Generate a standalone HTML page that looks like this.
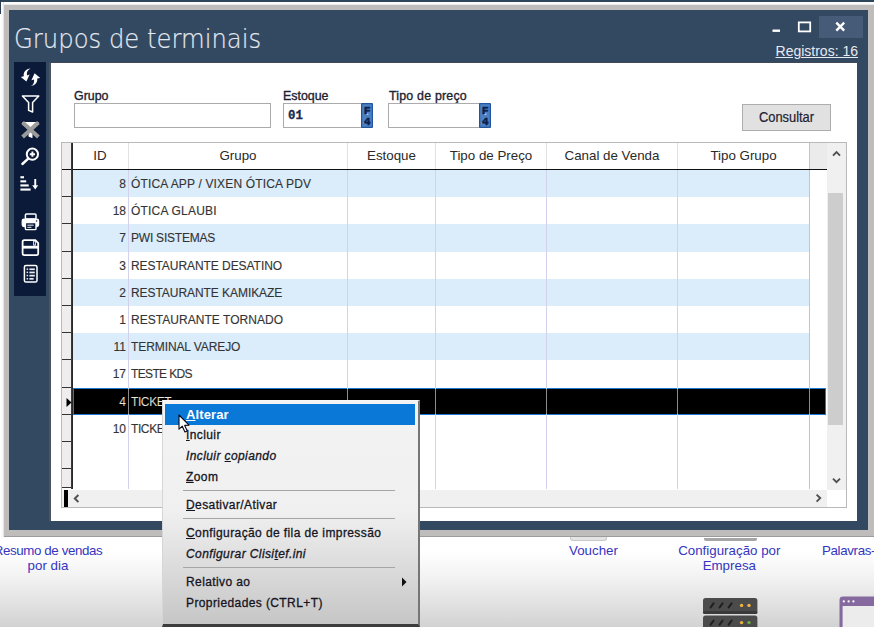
<!DOCTYPE html>
<html><head><meta charset="utf-8"><title>Grupos de terminais</title>
<style>
html,body{margin:0;padding:0}
body{width:874px;height:627px;position:relative;overflow:hidden;font-family:"Liberation Sans",sans-serif;background:#fff}
.abs{position:absolute}
.abs *{position:absolute}
#desk{left:0;top:0;width:874px;height:627px;background:linear-gradient(#fff 0,#fff 552px,#f1f1f1 580px,#d2d2d2 627px)}
#topstrip{left:0;top:0;width:874px;height:2px;background:#2e465b}
#leftstrip{left:0;top:0;width:1px;height:14px;background:#2a3c52}
#win{left:1px;top:2px;width:873px;height:535px;background:#bfbcbc}
#winhl{left:1px;top:2px;width:873px;height:3px;background:linear-gradient(#fdfdfd 0,#fafafa 2px,#dcdcdc 3px)}
#winhl2{left:1px;top:2px;width:3px;height:535px;background:linear-gradient(90deg,#fdfdfd 0,#f6f6f6 2px,#d4d4d4 3px)}
#blue{left:9px;top:10px;width:859px;height:520px;background:#334861}
#content{left:50.5px;top:63px;width:806.5px;height:458px;background:#fff}
#cedge{left:48.8px;top:62px;width:2px;height:459px;background:#4f535b}
#cedge2{left:49px;top:62px;width:808px;height:1.2px;background:#414957}
#tool{left:14px;top:62px;width:32px;height:234px;background:#0b1a39}
#title{left:14px;top:21px;-webkit-text-stroke:.2px #e3e9f0;font-family:"DejaVu Sans Light","DejaVu Sans","Liberation Sans",sans-serif;font-weight:200;font-size:27px;line-height:36px;color:#e3e9f0;white-space:nowrap;transform-origin:0 0;transform:scaleX(.90)}
#closebg{left:819px;top:16px;width:44px;height:22px;background:#465b78}
#reg{right:16px;top:42px;font-size:14px;line-height:18px;color:#e6ebf2;text-decoration:underline;white-space:nowrap}
.flabel{font-size:12.4px;line-height:14px;color:#1e2230;-webkit-text-stroke:.35px #1e2230;white-space:nowrap}
.finput{height:23px;border:1px solid #ababab;background:#fff}
.f4{width:11px;height:25px;background:#3f72ad}
#btn{left:742px;top:104px;width:87px;height:25px;border:1px solid #adadad;background:#e1e1e1;color:#1e2230}
#btn span{left:0;top:0;width:87px;font-size:14px;line-height:25px;text-align:center;transform:scaleX(.92);-webkit-text-stroke:.2px #1e2230}
#grid{left:61px;top:142px;width:784px;height:364px;border:1px solid #b9b9b9;background:#fff;overflow:hidden}
.row{left:11px;width:737px;font-size:12px;color:#333;-webkit-text-stroke:.15px #444;background:#fff}
.row.alt{background:#dbedfb}
.row.sel{width:753px;background:#000;color:#efe9dd;box-shadow:inset 0 0 0 1px #1b77d2}
.row span{top:0;height:100%;box-sizing:border-box;padding-bottom:0;display:flex;align-items:center;white-space:nowrap}
.row .id{left:0;width:53px;justify-content:flex-end}
.row .nm{left:58px}
.ind{left:0;width:10px;background:#efeded;border-bottom:1px solid #333}
.hd{top:0;height:26px;font-size:13.33px;line-height:25px;text-align:center;color:#2a2a2a;white-space:nowrap}
.vsep{top:27px;width:1px;height:319px;background:#d2d2ec}
.hsep{top:0;width:1px;height:26px;background:#e2e2e2}
.dlabel{color:#3535c0;font-size:13.33px;line-height:15.4px;text-align:center;white-space:nowrap}
#menu{left:162px;top:400px;width:255px;height:223px;border-left:1px solid #d6d6d6;border-top:1px solid #f6f6f6;border-right:2px solid #767676;border-bottom:3px solid #3c3c3c;background:linear-gradient(#f3f3f3 0,#f0f0f0 110px,#dcdcdc 165px,#c6c6c6 223px)}
.mi{left:23px;font-size:12px;line-height:20px;height:20px;color:#15151f;-webkit-text-stroke:.3px #15151f;white-space:nowrap;letter-spacing:.4px}
.mi i{position:static}
.mi u{position:static}
.msep{left:20px;width:212px;height:1px;background:#a6a6a6}

</style></head><body>
<div class="abs" id="desk"></div>
<div class="abs" id="win"></div>
<div class="abs" style="left:1px;top:536px;width:873px;height:1px;background:#9c9c9c"></div>
<div class="abs" id="winhl"></div><div class="abs" id="winhl2"></div>
<div class="abs" id="topstrip"></div><div class="abs" id="leftstrip"></div>
<div class="abs" id="blue"></div>
<div class="abs" id="title">Grupos de terminais</div>
<div class="abs" id="closebg"></div>
<svg class="abs" style="left:765px;top:14px" width="100" height="26" viewBox="0 0 100 26">
<rect x="7.5" y="15.5" width="7.5" height="2.4" fill="#fff"/>
<rect x="33.8" y="8.4" width="11.4" height="9" fill="none" stroke="#fff" stroke-width="1.8"/>
<path d="M71.3 8.7 L79.2 16.6 M79.2 8.7 L71.3 16.6" stroke="#fff" stroke-width="2.4" fill="none"/>
</svg>
<div class="abs" id="reg">Registros: 16</div>
<div class="abs" id="tool"></div>
<svg class="abs" style="left:14px;top:62px" width="32" height="235" viewBox="14 62 32 235">
<!-- refresh arrows -->
<g fill="#fff" stroke="none">
<path d="M30.6 68.6 C27.6 69.8 26.4 72.6 27.0 75.4 L29.6 74.6 L26.4 81.6 L20.8 76.9 L23.8 76.2 C23.2 72.4 25.8 68.9 30.6 68.6 Z"/>
<path d="M30.4 86.2 C33.4 85.0 34.6 82.2 34.0 79.4 L31.4 80.2 L34.6 73.2 L40.2 77.9 L37.2 78.6 C37.8 82.4 35.2 85.9 30.4 86.2 Z"/>
</g>
<!-- funnel outline -->
<path d="M22.4 96 L38.8 96 L32.6 102.4 L32.6 112 L28.6 110.4 L28.6 102.4 Z" fill="none" stroke="#fff" stroke-width="1.5" stroke-linejoin="round"/>
<!-- funnel with X -->
<path d="M22 122 L39 122 L32.4 129.4 L32.4 138 L28.6 136.4 L28.6 129.4 Z" fill="#fff"/>
<path d="M22.6 122.6 L38.4 137 M38.4 122.6 L22.6 137" stroke="#9b9b9b" stroke-width="4" fill="none"/>
<path d="M28.8 134.6 L32.2 134.6 L32.2 137.8 L28.8 136.4 Z" fill="#fff"/>
<!-- magnifier -->
<circle cx="32.4" cy="154.2" r="5.6" fill="none" stroke="#fff" stroke-width="2"/>
<path d="M28.2 158.6 L22.4 164" stroke="#fff" stroke-width="2.4" stroke-linecap="round"/>
<path d="M32.4 151.6 L32.4 156.8 M29.8 154.2 L35 154.2" stroke="#fff" stroke-width="1.9"/>
<!-- sort -->
<g fill="#fff">
<rect x="20.4" y="176.2" width="3.6" height="2.1"/>
<rect x="20.4" y="180.3" width="5.8" height="2.1"/>
<rect x="20.4" y="184.4" width="8.3" height="2.1"/>
<rect x="20.4" y="188.5" width="10.2" height="2.1"/>
<rect x="34.3" y="179" width="1.9" height="7.5"/>
<path d="M32.2 185.2 L38.2 185.2 L35.2 189.6 Z"/>
</g>
<!-- printer -->
<g>
<rect x="25.4" y="214" width="10.6" height="5" rx="1" fill="none" stroke="#fff" stroke-width="1.5"/>
<rect x="21.6" y="218.4" width="17.6" height="8.8" rx="2.4" fill="#fff"/>
<rect x="25.4" y="222.6" width="10.6" height="7" rx="0.8" fill="#0b1a39" stroke="#fff" stroke-width="1.4"/>
<rect x="27.4" y="224.6" width="6.2" height="1.2" fill="#c8ccd4"/>
<rect x="27.4" y="226.8" width="4" height="1.2" fill="#c8ccd4"/>
<circle cx="36.6" cy="221" r="0.8" fill="#0b1a39"/>
</g>
<!-- floppy -->
<g>
<path d="M22.6 241.8 Q22.6 240.2 24.2 240.2 L35.4 240.2 L38.2 243 L38.2 253.6 Q38.2 255.2 36.6 255.2 L24.2 255.2 Q22.6 255.2 22.6 253.6 Z" fill="none" stroke="#fff" stroke-width="1.8"/>
<rect x="23" y="245.8" width="15" height="2.8" fill="#fff"/>
<rect x="33.2" y="240.6" width="2.6" height="5" fill="#fff"/>
<rect x="34" y="241.6" width="0.9" height="3" fill="#0b1a39"/>
</g>
<!-- list -->
<g>
<rect x="24.4" y="265.4" width="12.6" height="16.6" rx="1.6" fill="none" stroke="#fff" stroke-width="1.5"/>
<g fill="#e8ecf2">
<rect x="26.6" y="268.4" width="1.5" height="1.5"/><rect x="29.4" y="268.4" width="5.4" height="1.7"/>
<rect x="26.6" y="271.6" width="1.5" height="1.5"/><rect x="29.4" y="271.6" width="5.4" height="1.7"/>
<rect x="26.6" y="274.8" width="1.5" height="1.5"/><rect x="29.4" y="274.8" width="5.4" height="1.7"/>
<rect x="26.6" y="278" width="1.5" height="1.5"/><rect x="29.4" y="278" width="4.2" height="1.7"/>
</g>
</g>
</svg>

<div class="abs" id="cedge"></div><div class="abs" id="cedge2"></div>
<div class="abs" id="content"></div>
<div class="abs flabel" style="left:74px;top:89px">Grupo</div>
<div class="abs finput" style="left:74px;top:103px;width:195px"></div>
<div class="abs flabel" style="left:283px;top:89px">Estoque</div>
<div class="abs finput" style="left:283px;top:103px;width:77px"><span style="left:4px;top:5px;font-family:'Liberation Mono',monospace;font-weight:bold;font-size:12.4px;line-height:14px;color:#1b2a4e;-webkit-text-stroke:.3px #1b2a4e">01</span></div>
<svg class="abs" style="left:361px;top:103px" width="12" height="25" viewBox="0 0 12 25"><rect x="0" y="0" width="12" height="25" rx="1" fill="#23559e"/><rect x="1.2" y="1.2" width="9.6" height="22.6" fill="#4c80c4"/><rect x="2.4" y="19" width="3" height="1.6" fill="#c9bba6"/><rect x="5.4" y="10.6" width="2" height="1.4" fill="#b9c4d6"/><text x="6.2" y="11" text-anchor="middle" font-family="Liberation Mono,monospace" font-weight="bold" font-size="11.5" stroke="#0c1f4a" stroke-width=".5" fill="#0c1f4a">F</text><text x="6.2" y="21.8" text-anchor="middle" font-family="Liberation Mono,monospace" font-weight="bold" font-size="11.5" stroke="#0c1f4a" stroke-width=".5" fill="#0c1f4a">4</text></svg>
<div class="abs flabel" style="left:389px;top:89px;letter-spacing:.2px">Tipo de preço</div>
<div class="abs finput" style="left:388px;top:103px;width:90px"></div>
<svg class="abs" style="left:479px;top:103px" width="12" height="25" viewBox="0 0 12 25"><rect x="0" y="0" width="12" height="25" rx="1" fill="#23559e"/><rect x="1.2" y="1.2" width="9.6" height="22.6" fill="#4c80c4"/><rect x="2.4" y="19" width="3" height="1.6" fill="#c9bba6"/><rect x="5.4" y="10.6" width="2" height="1.4" fill="#b9c4d6"/><text x="6.2" y="11" text-anchor="middle" font-family="Liberation Mono,monospace" font-weight="bold" font-size="11.5" stroke="#0c1f4a" stroke-width=".5" fill="#0c1f4a">F</text><text x="6.2" y="21.8" text-anchor="middle" font-family="Liberation Mono,monospace" font-weight="bold" font-size="11.5" stroke="#0c1f4a" stroke-width=".5" fill="#0c1f4a">4</text></svg>
<div class="abs" id="btn"><span>Consultar</span></div>

<div class="abs" id="grid">
<div class="row alt" style="top:27px;height:27px"><span class="id">8</span><span class="nm" style="letter-spacing:0.165px">ÓTICA APP / VIXEN ÓTICA PDV</span></div>
<div class="row" style="top:54px;height:27px"><span class="id">18</span><span class="nm" style="letter-spacing:0.2px">ÓTICA GLAUBI</span></div>
<div class="row alt" style="top:81px;height:28px"><span class="id">7</span><span class="nm" style="letter-spacing:-0.22px">PWI SISTEMAS</span></div>
<div class="row" style="top:109px;height:27px"><span class="id">3</span><span class="nm" style="letter-spacing:-0.06px">RESTAURANTE DESATINO</span></div>
<div class="row alt" style="top:136px;height:27px"><span class="id">2</span><span class="nm" style="letter-spacing:-0.06px">RESTAURANTE KAMIKAZE</span></div>
<div class="row" style="top:163px;height:27px"><span class="id">1</span><span class="nm" style="letter-spacing:0.04px">RESTAURANTE TORNADO</span></div>
<div class="row alt" style="top:190px;height:27px"><span class="id">11</span><span class="nm" style="letter-spacing:-0.09px">TERMINAL VAREJO</span></div>
<div class="row" style="top:217px;height:28px"><span class="id">17</span><span class="nm" style="letter-spacing:-0.64px">TESTE KDS</span></div>
<div class="row alt sel" style="top:245px;height:27px"><span class="id">4</span><span class="nm" style="letter-spacing:-0.4px">TICKET</span></div>
<div class="row" style="top:272px;height:27px"><span class="id">10</span><span class="nm" style="letter-spacing:-0.4px">TICKET</span></div>
<div class="ind" style="top:27px;height:26px"></div>
<div class="ind" style="top:54px;height:26px"></div>
<div class="ind" style="top:81px;height:27px"></div>
<div class="ind" style="top:109px;height:26px"></div>
<div class="ind" style="top:136px;height:26px"></div>
<div class="ind" style="top:163px;height:26px"></div>
<div class="ind" style="top:190px;height:26px"></div>
<div class="ind" style="top:217px;height:27px"></div>
<div class="ind" style="top:245px;height:26px"></div>
<div class="ind" style="top:272px;height:26px"></div>
<div class="ind" style="top:299px;height:26px"></div>
<div class="ind" style="top:326px;height:18px"></div>
<div class="vsep" style="left:66px"></div>
<div class="vsep" style="left:285px"></div>
<div class="vsep" style="left:373px"></div>
<div class="vsep" style="left:484px"></div>
<div class="vsep" style="left:615px"></div>
<div class="vsep" style="left:747px;top:0;height:346px;background:#c4c4c4"></div>
<div class="hsep" style="left:66px"></div>
<div class="hsep" style="left:285px"></div>
<div class="hsep" style="left:373px"></div>
<div class="hsep" style="left:484px"></div>
<div class="hsep" style="left:615px"></div>
<div style="left:66px;top:246px;width:1px;height:25px;background:#8c8c8c"></div>
<div style="left:285px;top:246px;width:1px;height:25px;background:#8c8c8c"></div>
<div style="left:373px;top:246px;width:1px;height:25px;background:#8c8c8c"></div>
<div style="left:484px;top:246px;width:1px;height:25px;background:#8c8c8c"></div>
<div style="left:615px;top:246px;width:1px;height:25px;background:#8c8c8c"></div>
<div style="left:747px;top:246px;width:1px;height:25px;background:#8c8c8c"></div>
<div style="left:0;top:0;width:10px;height:26px;background:#efeded"></div>
<div style="left:748px;top:0;width:17px;height:26px;background:#ebebeb"></div>
<div class="hd" style="left:11px;width:54px">ID</div>
<div class="hd" style="left:67px;width:218px">Grupo</div>
<div class="hd" style="left:286px;width:87px">Estoque</div>
<div class="hd" style="left:374px;width:110px">Tipo de Preço</div>
<div class="hd" style="left:485px;width:130px">Canal de Venda</div>
<div class="hd" style="left:616px;width:131px">Tipo Grupo</div>
<div style="left:0;top:26px;width:765px;height:1px;background:#111"></div>
<div style="left:9px;top:0;width:2px;height:346px;background:linear-gradient(90deg,#8a8a8a 0,#2a2a2a .6px,#2a2a2a 1.6px,#9a9a9a 2px)"></div>
<div style="left:765px;top:0;width:19px;height:347px;background:#f0f0f0"></div>
<div style="left:766px;top:50px;width:15px;height:232px;background:#cdcdcd"></div>
<div style="left:0;top:347px;width:765px;height:17px;background:#f0f0f0"></div>
<div style="left:2px;top:347px;width:4px;height:17px;background:#000"></div>
<svg style="left:0;top:0" width="784" height="364" viewBox="0 0 784 364" fill="none" stroke="#505050" stroke-width="1.9">
<path d="M771 12.6 L774.5 9 L778 12.6"/>
<path d="M771 335.6 L774.5 339.2 L778 335.6"/>
<path d="M16.4 352 L12.8 355.5 L16.4 359"/>
<path d="M754.6 351.6 L758.2 355.1 L754.6 358.6"/>
<path d="M4.5 255 L9.5 259.5 L4.5 264 Z" fill="#000" stroke="none"/>
</svg>

</div>
<div class="abs dlabel" style="left:-12px;top:543px;width:120px"><span style="position:static;letter-spacing:-.4px">Resumo de vendas</span><br>por dia</div>
<div class="abs dlabel" style="left:533.5px;top:543px;width:120px">Voucher</div>
<div class="abs dlabel" style="left:669.3px;top:543px;width:120px">Configuração por<br>Empresa</div>
<div class="abs dlabel" style="left:822px;top:543px;text-align:left;letter-spacing:-.35px">Palavras-</div>
<div class="abs" style="left:704px;top:537.5px;width:53px;height:3.5px;background:#a6a6a6;border-radius:0 0 2px 2px"></div>
<div class="abs" style="left:570px;top:537px;width:35px;height:3px;background:#e4e4e4;border:1px solid #c8c8c8;border-top:none;border-radius:0 0 3px 3px"></div>
<svg class="abs" style="left:700px;top:594px" width="174" height="33" viewBox="700 594 174 33">
<rect x="703" y="598" width="54.4" height="16" rx="2.5" fill="#4b4b4b"/>
<rect x="703" y="611" width="54.4" height="3" rx="1.5" fill="#3a3a3a"/>
<rect x="703" y="615.4" width="54.4" height="16" rx="2.5" fill="#4b4b4b"/>
<g stroke="#1f1f1f" stroke-width="2" stroke-linecap="round">
<path d="M710.6 607.4 L713.6 603.4 M719.6 607.4 L722.6 603.4 M728.6 607.4 L731.6 603.4"/>
<path d="M710.6 624.6 L713.6 620.6 M719.6 624.6 L722.6 620.6 M728.6 624.6 L731.6 620.6"/>
</g>
<circle cx="741.6" cy="605.4" r="1.7" fill="#f1b341"/><circle cx="749" cy="605.4" r="1.7" fill="#f1b341"/>
<circle cx="741.6" cy="622.6" r="1.7" fill="#f1b341"/><circle cx="749" cy="622.6" r="1.7" fill="#6fae3e"/>
<path d="M839.5 600 Q839.5 596.6 843 596.6 L874 596.6 L874 627 L839.5 627 Z" fill="#866a9f"/>
<rect x="842.6" y="606" width="32" height="21" fill="#ececec"/>
<circle cx="843.8" cy="601.4" r="1.1" fill="#fff"/><circle cx="848.6" cy="601.4" r="1.1" fill="#fff"/><circle cx="853.4" cy="601.4" r="1.1" fill="#fff"/>
</svg>
<div class="abs" id="menu">
<div style="left:2px;top:3px;width:250px;height:21px;background:#0a78d7"></div>
<div class="mi" style="top:3.5px;color:#fff;font-weight:bold;font-size:13px;letter-spacing:.1px;-webkit-text-stroke:0"><u>A</u>lterar</div>
<div class="mi" style="top:24px"><u>I</u>ncluir</div>
<div class="mi" style="top:45px"><i>Incluir <u>c</u>opiando</i></div>
<div class="mi" style="top:66px"><u>Z</u>oom</div>
<div class="msep" style="top:89px"></div>
<div class="mi" style="top:94px"><u>D</u>esativar/Ativar</div>
<div class="msep" style="top:117px"></div>
<div class="mi" style="top:122px"><u>C</u>onfiguração de fila de impressão</div>
<div class="mi" style="top:143px"><i>Configurar Clisi<u>t</u>ef.ini</i></div>
<div class="msep" style="top:166px"></div>
<div class="mi" style="top:171px">Relativo ao</div>
<div class="mi" style="top:192px">Propriedades (CTRL+T)</div>
<svg style="left:238px;top:176px" width="8" height="10"><path d="M1 0.5 L5.5 5 L1 9.5 Z" fill="#111"/></svg>
</div>
<svg class="abs" style="left:178px;top:414px" width="13" height="20" viewBox="0 0 13 20"><path d="M1 1 L1 15.2 L4.3 12.2 L6.9 17.9 L9.2 16.9 L6.7 11.4 L11 11.2 Z" fill="#fff" stroke="#0a0a1a" stroke-width="1.1" stroke-linejoin="round"/></svg>

</body></html>
